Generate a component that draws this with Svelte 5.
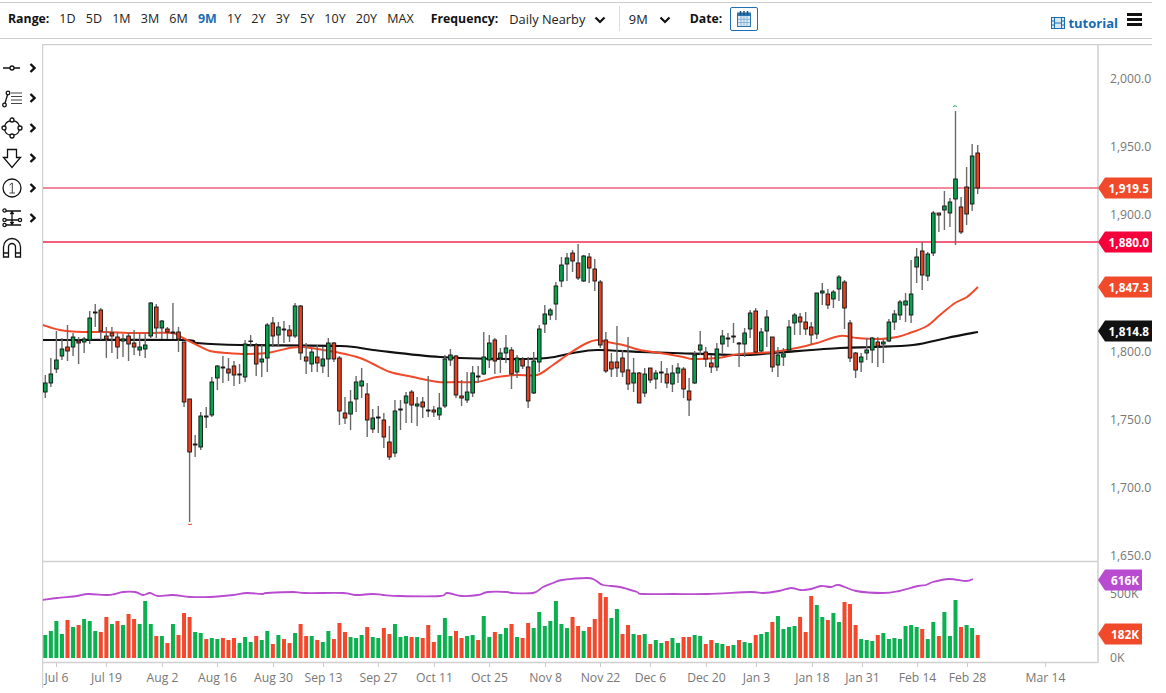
<script>
	const ranges = ['1D', '5D', '1M', '3M', '6M', '9M', '1Y', '2Y', '3Y', '5Y', '10Y', '20Y', 'MAX'];

	// hi, body top, body bottom, lo, 1 = up / 0 = down. values are page pixels
	const candles = [
		[375,383,392,398,1],[358,374,383,387,1],[331,360,369,373,1],[338,349,356,360,1],[325,347,351,361,0],[333,337,347,356,1],
		[337,341,343,364,0],[337,339,342,353,1],[311,318,340,344,1],[304,312,313,327,0],[308,310,331,340,0],[327,336,339,358,0],
		[327,333,336,353,0],[333,337,347,359,0],[334,339,341,357,1],[333,336,344,361,0],[330,343,347,355,0],[333,347,350,356,1],
		[333,345,349,358,1],[302,303,336,338,1],[304,307,328,338,0],[320,321,328,339,1],[327,329,332,339,0],[303,332,333,339,0],
		[327,332,339,352,0],[342,342,402,407,0],[399,399,452,522,0],[435,444,445,457,0],[412,416,447,450,1],[407,416,417,428,0],
		[377,382,415,417,1],[365,366,378,390,1],[356,367,368,383,0],[358,369,373,381,0],[361,366,375,386,0],[364,374,375,384,1],
		[340,344,377,382,1],[335,341,341,347,1],[343,345,364,376,0],[345,359,362,377,1],[323,325,358,372,1],[317,323,336,347,0],
		[322,327,335,347,1],[321,329,330,343,0],[325,330,336,342,0],[303,306,336,338,1],[305,306,353,360,0],[343,357,361,374,0],
		[348,352,364,372,1],[345,357,363,372,0],[347,359,366,373,1],[338,343,359,377,1],[342,343,359,362,0],[356,358,411,425,0],
		[397,413,418,424,0],[390,402,414,430,1],[376,382,399,412,1],[368,381,386,398,1],[383,394,420,437,0],[409,418,429,433,1],
		[406,417,418,433,0],[413,420,437,448,0],[426,442,457,460,0],[400,411,453,457,1],[400,409,410,430,1],[392,396,403,423,1],
		[390,392,405,423,0],[397,404,406,426,1],[397,402,407,418,0],[376,410,411,417,0],[406,410,412,417,0],[393,408,415,420,1],
		[355,359,406,408,1],[349,355,360,366,1],[355,356,395,398,0],[380,396,398,406,0],[372,392,400,403,1],[366,373,393,397,1],
		[366,376,377,383,0],[332,357,374,375,1],[335,343,360,368,1],[338,340,361,374,0],[348,353,358,373,1],[335,348,353,363,1],
		[347,350,374,389,0],[355,358,372,378,1],[357,359,366,369,0],[357,367,401,408,0],[352,361,393,394,1],[325,329,362,372,1],
		[305,314,324,333,1],[308,310,315,320,1],[282,286,304,320,1],[257,265,281,287,1],[253,258,264,281,1],[250,253,261,272,0],
		[244,263,278,280,0],[255,256,281,282,1],[253,257,268,283,0],[259,269,281,291,0],[280,282,345,348,0],[332,340,371,373,0],
		[353,362,369,377,0],[326,362,368,377,0],[350,358,372,377,0],[337,370,384,390,0],[358,373,383,392,1],[372,373,403,403,0],
		[368,374,393,397,1],[368,368,380,383,0],[370,373,379,389,1],[361,372,373,383,0],[368,374,383,388,0],[365,373,384,392,1],
		[363,368,373,383,1],[367,369,389,398,0],[378,391,400,416,0],[351,355,383,384,1],[331,345,350,355,1],[347,352,359,367,0],
		[355,363,367,373,0],[343,349,367,371,1],[330,336,344,353,1],[333,338,339,347,0],[323,336,337,343,0],[342,343,344,367,0],
		[328,333,344,357,1],[310,313,329,338,1],[308,311,352,353,0],[328,332,351,352,1],[310,317,331,347,1],[337,337,367,372,0],
		[347,355,365,377,1],[348,354,357,366,1],[320,327,350,351,1],[313,315,323,335,1],[313,317,322,335,0],[312,322,329,335,0],
		[322,327,335,345,0],[293,293,334,339,1],[283,291,293,305,1],[289,294,305,309,0],[290,292,299,308,1],[275,277,289,301,1],
		[280,282,308,329,0],[320,323,358,362,0],[352,353,370,378,0],[353,357,362,372,1],[338,350,353,360,1],[337,338,350,363,1],
		[337,342,346,367,0],[339,342,344,363,1],[319,322,341,342,1],[310,314,322,330,1],[300,302,315,320,1],[293,301,305,322,1],
		[260,294,315,323,1],[248,257,267,283,1],[242,251,275,290,0],[252,254,276,281,1],[211,213,253,256,1],[213,213,215,232,0],
		[191,206,210,230,1],[198,202,213,227,1],[111,179,199,245,1],[197,207,232,234,0],[167,187,214,225,0],[144,156,204,211,1],
		[145,153,188,194,0]
	];

	// top of each volume bar, bars sit on y=658
	const volTops = [
		635,631,621,634,620,627,625,619,621,631,632,617,624,621,625,614,619,624,601,624,636,636,643,624,635,613,617,632,633,639,
		638,639,638,640,638,643,637,642,636,640,631,644,635,639,643,633,624,636,636,640,642,631,639,623,632,637,638,635,627,637,
		638,628,634,624,637,636,637,637,638,625,642,635,618,636,631,638,636,635,640,616,637,632,634,628,624,637,638,623,628,612,
		626,621,601,624,628,617,626,631,627,619,593,597,618,609,634,625,634,635,634,644,640,643,641,638,643,637,637,635,636,644,
		640,643,644,646,645,640,642,643,635,634,632,622,616,629,627,626,617,632,596,605,617,620,613,622,602,604,625,639,640,641,
		635,633,639,638,639,626,625,627,629,639,622,636,612,636,600,627,625,628,635
	];
	const volUp = [
		'1111010111','0010100111','0101000110','1100011101','1010010010','1100011101','1001110100','0111001101','1011010011',
		'1111100100','0011001010','1101100110','0110101101','1011110001','1011000111','0111111101','101110110'
	].join('');

	const red = [[43,325],[60,330],[83,332],[107,332],[128,333],[150,333],[173,333],[183,338],[197,345],[210,351],[227,353],[247,354],[267,353],[290,348],[303,347],[323,350],[340,353],[360,358],[373,364],[390,372],[413,377],[438,382],[457,382],[477,382],[497,377],[517,375],[537,375],[553,365],[570,353],[587,343],[597,340],[607,342],[623,345],[640,350],[660,353],[683,357],[693,359],[717,358],[740,354],[773,352],[797,348],[817,343],[840,336],[857,338],[880,339],[897,337],[910,333],[927,326],[940,315],[955,303],[967,297],[978,287]];
	const black = [[43,340],[73,340],[183,340],[197,343],[240,345],[340,346],[373,350],[440,357],[507,359],[547,358],[573,353],[597,350],[640,352],[673,353],[740,355],[773,353],[840,348],[873,347],[913,345],[947,338],[978,332]];
	const purple = [[43,600],[57,598],[77,596],[88,594],[107,595],[115,594],[123,592],[135,592],[143,595],[150,593],[158,596],[173,595],[190,597],[210,597],[233,595],[247,593],[262,594],[267,593],[293,592],[305,593],[343,593],[355,595],[373,594],[383,595],[400,596],[440,596],[447,593],[462,596],[478,595],[488,592],[507,592],[512,593],[533,593],[543,587],[553,583],[562,580],[587,578],[595,580],[603,585],[620,587],[637,592],[642,594],[673,594],[707,594],[750,592],[763,593],[779,591],[791,588],[801,590],[811,589],[821,586],[831,587],[839,585],[856,591],[883,593],[899,591],[918,586],[926,585],[933,582],[949,579],[966,581],[973,579]];

	const dates = [['Jul 6',56],['Jul 19',106],['Aug 2',162],['Aug 16',217],['Aug 30',273],['Sep 13',323],['Sep 27',378],['Oct 11',434],['Oct 25',489],['Nov 8',545],['Nov 22',600],['Dec 6',650],['Dec 20',706],['Jan 3',756],['Jan 18',812],['Jan 31',862],['Feb 14',917],['Feb 28',967],['Mar 14',1045]];
	const prices = [['2,000.0',79],['1,950.0',147],['1,900.0',215],['1,800.0',352],['1,750.0',420],['1,700.0',488],['1,650.0',556]];
	const tags = [
		{ text: '1,919.5', y: 188, right: 1152, color: '#f04a2a' },
		{ text: '1,880.0', y: 242, right: 1152, color: '#f5003a' },
		{ text: '1,847.3', y: 287, right: 1152, color: '#f04a2a' },
		{ text: '1,814.8', y: 331, right: 1152, color: '#111111' },
		{ text: '616K', y: 580, right: 1142, color: '#b94bd0' },
		{ text: '182K', y: 634, right: 1142, color: '#f04a2a' }
	];

	const barX = (i) => 45.3 + i * 5.55;
	const tagPath = (t) => `M1098 ${t.y}L1105 ${t.y - 10.5}H${t.right}V${t.y + 10.5}H1105Z`;

	// catmull-rom through the points, the moving averages are smooth curves
	function smooth(list) {
		let d = `M${list[0][0]} ${list[0][1]}`;
		for (let i = 0; i < list.length - 1; i++) {
			const a = list[Math.max(i - 1, 0)];
			const b = list[i];
			const c = list[i + 1];
			const e = list[Math.min(i + 2, list.length - 1)];
			const c1 = [b[0] + (c[0] - a[0]) / 6, b[1] + (c[1] - a[1]) / 6];
			const c2 = [c[0] - (e[0] - b[0]) / 6, c[1] - (e[1] - b[1]) / 6];
			d += `C${c1[0].toFixed(1)} ${c1[1].toFixed(1)} ${c2[0].toFixed(1)} ${c2[1].toFixed(1)} ${c[0]} ${c[1]}`;
		}
		return d;
	}
</script>

<div class="page">
	<header class="toolbar">
		<b class="label">Range:</b>
		<div class="ranges">
			{#each ranges as r}
				<span class:active={r === '9M'}>{r}</span>
			{/each}
		</div>
		<b class="label freq">Frequency:</b>
		<span class="select">Daily Nearby</span>
		<svg class="chev" viewBox="0 0 12 8"><path d="M1.5 1.5 6 6l4.500-4.500" /></svg>
		<span class="sep"></span>
		<span class="select period">9M</span>
		<svg class="chev small" viewBox="0 0 12 8"><path d="M1.5 1.500 6 6l4.500-4.500" /></svg>
		<b class="label date">Date:</b>
		<button class="cal" aria-label="Pick date">
			<svg viewBox="0 0 16 18" width="16" height="18">
				<rect x="1.500" y="3" width="13" height="13.500" fill="#dcebf6" stroke="#2a74b0" />
				<rect x="1" y="3" width="14" height="3" fill="#2a74b0" />
				<path d="M4.500 1v4M8 1v4M11.500 1v4" stroke="#174f80" stroke-width="1.500" />
				<path d="M5 6v10M8 6v10M11 6v10M2 9.300h12M2 12.500h12" stroke="#7aa9cf" stroke-width=".8" />
			</svg>
		</button>
		<a class="tutorial" href="#top">
			<svg viewBox="0 0 14 12" width="14" height="12">
				<rect x=".5" y=".5" width="13" height="11" fill="#d8e8f4" stroke="#1a6fb0" />
				<path d="M3.500 .5v11M10.500 .5v11M.5 4h3M.5 8h3M10.500 4h3M10.500 8h3M3.500 6h7" stroke="#1a6fb0" fill="none" />
			</svg>
			tutorial
		</a>
		<div class="burger"><i></i><i></i><i></i></div>
	</header>

	<div class="main">
		<nav class="tools">
			<div class="tool">
				<svg viewBox="0 0 24 24"><path d="M3 12h7M14 12h6" /><circle cx="12" cy="12" r="2" /></svg>
				<svg class="more" viewBox="0 0 7 10"><path d="M1.500 1 5.500 5l-4 4" /></svg>
			</div>
			<div class="tool">
				<svg viewBox="0 0 24 24"><circle cx="4.500" cy="19" r="1.800" /><circle cx="8" cy="7" r="1.800" /><path d="M5 17.300 7.500 8.700" /><path class="thin" d="M11 7h11M11 10.500h11M11 14h11M11 17.500h11" /></svg>
				<svg class="more" viewBox="0 0 7 10"><path d="M1.500 1 5.500 5l-4 4" /></svg>
			</div>
			<div class="tool">
				<svg viewBox="0 0 24 24"><path d="M10 4.800Q5.500 6 4.800 10M14 4.800Q18.500 6 19.200 10M19.200 14Q18.500 18 14 19.200M4.800 14Q5.500 18 10 19.200" /><circle cx="12" cy="4" r="2" /><circle cx="20" cy="12" r="2" /><circle cx="12" cy="20" r="2" /><circle cx="4" cy="12" r="2" /></svg>
				<svg class="more" viewBox="0 0 7 10"><path d="M1.500 1 5.500 5l-4 4" /></svg>
			</div>
			<div class="tool">
				<svg viewBox="0 0 24 24"><path d="M7.500 3.500h9v8H20.500L12 21.500 3.500 11.500h4z" /></svg>
				<svg class="more" viewBox="0 0 7 10"><path d="M1.500 1 5.500 5l-4 4" /></svg>
			</div>
			<div class="tool">
				<svg viewBox="0 0 24 24"><circle cx="12" cy="12" r="9" /><path class="thin" d="M9.500 9 12.300 7V17M9.500 17h5.500" /></svg>
				<svg class="more" viewBox="0 0 7 10"><path d="M1.500 1 5.500 5l-4 4" /></svg>
			</div>
			<div class="tool">
				<svg viewBox="0 0 24 24"><circle cx="4.500" cy="4.500" r="1.600" /><circle cx="4.500" cy="14" r="1.600" /><circle cx="4.500" cy="19" r="1.600" /><circle cx="20" cy="14" r="1.600" /><path d="M6 5h15M6 14h12M6 19h15M12 6v12M10.300 8 12 6l1.700 2M10.300 16 12 18l1.700-2" /></svg>
				<svg class="more" viewBox="0 0 7 10"><path d="M1.500 1 5.500 5l-4 4" /></svg>
			</div>
			<div class="tool">
				<svg viewBox="0 0 24 24"><path d="M3.500 21V11a8.500 8.500 0 0 1 17 0v10h-5V11a3.500 3.500 0 0 0-7 0v10zM3.500 17h5M15.500 17h5" /></svg>
			</div>
		</nav>

		<svg class="chart" viewBox="42 44 1110 649">
			<path class="frame" d="M42.500 44.500H1152M42.500 44v644M1098 44v619M42.500 561.500H1098M42.500 662.500H1098" />
			{#each dates as d}
				<path class="tick" d="M{d[1] + .5} 663v4" />
				<text class="axis" x={d[1] + .5} y="682" text-anchor="middle">{d[0]}</text>
			{/each}
			{#each prices as p}
				<text class="axis" x="1110" y={p[1] + 3.700}>{p[0]}</text>
			{/each}
			<text class="axis" x="1110" y="598">500K</text>
			<text class="axis" x="1110" y="662">0K</text>

			<path class="hline light" d="M43 188H1098" />
			<path class="hline" d="M43 242H1098" />

			<path class="ma dark" stroke="#111111" d={smooth(black)} />
			<path class="ma" stroke="#f04a2a" d={smooth(red)} />

			{#each candles as c, i}
				<path class="wick" d="M{barX(i)} {c[0]}V{c[3]}" />
				<rect class="body" x={barX(i) - 1.800} y={c[1]} width="3.600" height={Math.max(c[2] - c[1], 0.5)} fill={c[4] ? '#0aa14e' : '#e5401f'} />
			{/each}

			<path class="mark" stroke="#19b35e" d="M953 106.500q2-1.500 4 0" />
			<path class="mark" stroke="#e5401f" d="M188 524q2 1.500 4 0" />

			{#each volTops as top, i}
				<rect x={barX(i) - 2} y={top} width="4" height={658 - top} fill={volUp[i] === '1' ? '#0bb04f' : '#f4472b'} />
			{/each}
			<path class="ma vma" stroke="#b94bd0" d={smooth(purple)} />

			{#each tags as t}
				<path d={tagPath(t)} fill={t.color} />
				<text class="tag" x={t.right - 3} y={t.y + 4.500} text-anchor="end">{t.text}</text>
			{/each}
		</svg>
	</div>
</div>

<style>
	:global(body) {
		background: #fff;
	}

	.page {
		width: 1152px;
		height: 693px;
		padding-top: 2px;
		box-sizing: border-box;
		display: flex;
		flex-direction: column;
		font-family: 'Open Sans', 'Noto Sans', sans-serif;
		color: #222;
		overflow: hidden;
	}

	.toolbar {
		height: 37px;
		box-sizing: border-box;
		flex: none;
		display: flex;
		align-items: center;
		padding: 0 0 4px 8px;
		border-top: 1.500px solid #ccc;
		border-bottom: 1.500px solid #ccc;
		font-size: 12.500px;
	}

	.label {
		font-size: 12.300px;
		font-weight: 700;
		color: #111;
	}

	.ranges {
		display: flex;
		gap: 10.200px;
		margin-left: 10px;
	}

	.active {
		color: #1a6fb5;
		font-weight: 700;
	}

	.freq {
		margin-left: 17px;
	}

	.select {
		margin-left: 11px;
		font-size: 12.800px;
	}

	.select.period {
		margin-left: 9px;
	}

	.chev {
		width: 12px;
		height: 8px;
		margin-left: 9px;
		margin-top: 3px;
	}

	.chev path {
		fill: none;
		stroke: #111;
		stroke-width: 2.200;
	}

	.chev.small {
		margin-left: 11px;
	}

	.sep {
		width: 1px;
		height: 25px;
		background: #ddd;
		margin: 0 0 0 12.500px;
	}

	.date {
		margin-left: 19px;
	}

	.cal {
		width: 28px;
		height: 24px;
		margin-left: 7.500px;
		padding: 0;
		display: flex;
		align-items: center;
		justify-content: center;
		background: #fff;
		border: 1px solid #1f6fb5;
		border-radius: 2px;
	}

	.tutorial {
		margin-left: auto;
		margin-top: 9px;
		display: flex;
		align-items: center;
		gap: 3px;
		color: #156ab0;
		font-size: 13px;
		font-weight: 700;
		text-decoration: none;
	}

	.burger {
		width: 15px;
		margin: 2px 10px 0 9px;
		display: flex;
		flex-direction: column;
		gap: 2px;
	}

	.burger i {
		height: 3px;
		background: #111;
	}

	.main {
		flex: 1;
		display: flex;
		margin-top: 5px;
		min-height: 0;
	}

	.tools {
		width: 42px;
		flex: none;
		padding-top: 9px;
		box-sizing: border-box;
		display: flex;
		flex-direction: column;
	}

	.tool {
		height: 30px;
		display: flex;
		align-items: center;
	}

	.tool svg {
		width: 24px;
		height: 24px;
		flex: none;
		fill: none;
		stroke: #111;
		stroke-width: 1.300;
	}

	.tool .thin {
		stroke: #444;
		stroke-width: 1;
	}

	.tool .more {
		width: 7px;
		height: 10px;
		margin-left: 5px;
		stroke-width: 2.400;
	}

	.chart {
		width: 1110px;
		height: 649px;
		flex: none;
		display: block;
	}

	.frame {
		fill: none;
		stroke: #d0d0d0;
		stroke-width: 1.500;
	}

	.tick {
		stroke: #ccc;
	}

	.axis {
		font-size: 12.200px;
		fill: #777;
	}

	.hline {
		stroke: #ee2a52;
		stroke-width: 1.300;
	}

	.hline.light {
		stroke: #f0617c;
	}

	.ma {
		fill: none;
		stroke-width: 2;
		stroke-linejoin: round;
	}

	.ma.dark {
		stroke-width: 2.200;
	}

	.vma {
		stroke-width: 1.800;
	}

	.wick {
		stroke: #6a6a6a;
		stroke-width: 1.400;
	}

	.body {
		stroke: #111;
		stroke-width: .9;
	}

	.mark {
		fill: none;
		stroke-width: 1;
	}

	.tag {
		font-size: 11.800px;
		font-weight: 700;
		fill: #fff;
	}
</style>
